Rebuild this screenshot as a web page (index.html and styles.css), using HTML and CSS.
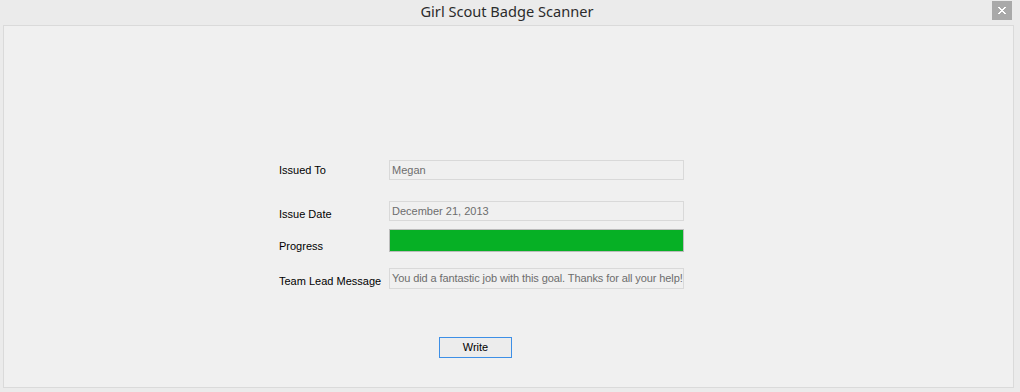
FILE: index.html
```html
<!DOCTYPE html>
<html>
<head>
<meta charset="utf-8">
<link rel="stylesheet" href="styles.css">
</head>
<body>
<div class="window">
  <div class="titlebar">
    <span class="title">Girl Scout Badge Scanner</span>
    <div class="close">
      <svg width="8" height="7" viewBox="0 0 8 7"><path d="M0 0h2v1h1v1h2V1h1V0h2v1H7v1H6v1H5v1h1v1h1v1h1v1H6V6H5V5H3v1H2v1H0V6h1V5h1V4h1V3H2V2H1V1H0z" fill="#fff"/></svg>
    </div>
  </div>
  <div class="client">
    <div class="form">
      <div class="row r1">
        <div class="label">Issued To</div>
        <div class="field box">Megan</div>
      </div>
      <div class="row r2">
        <div class="label">Issue Date</div>
        <div class="field box">December 21, 2013</div>
      </div>
      <div class="row r3">
        <div class="label">Progress</div>
        <div class="field progress"><div class="fill" style="width:100%"></div></div>
      </div>
      <div class="row r4">
        <div class="label">Team Lead Message</div>
        <div class="field box msg">You did a fantastic job with this goal. Thanks for all your help!</div>
      </div>
      <div class="actions">
        <button class="btn">Write</button>
      </div>
    </div>
  </div>
</div>
</body>
</html>
```
FILE: styles.css
```css
html, body {
  margin: 0;
  padding: 0;
  background: #ebebeb;
}
.window {
  width: 1020px;
  height: 392px;
  background: #ebebeb;
  font-family: "Liberation Sans", Arial, sans-serif;
  position: relative;
}
.titlebar {
  height: 25px;
  display: flex;
  justify-content: center;
  align-items: flex-start;
}
.title {
  font-family: "Noto Sans", "Open Sans", sans-serif;
  font-size: 14.6px;
  line-height: 22px;
  color: #2b2b2b;
  margin-left: -6px;
}
.close {
  position: absolute;
  left: 992px;
  top: 1px;
  width: 20px;
  height: 19px;
  background: #a9a9a9;
  display: flex;
  align-items: center;
  justify-content: center;
}
.client {
  margin-left: 3px;
  width: 1011px;
  height: 363px;
  box-sizing: border-box;
  border: 1px solid #dadada;
  background: #f0f0f0;
  padding-top: 134px;
  padding-left: 275px;
}
.form {
  display: flex;
  flex-direction: column;
  width: 405px;
}
.row {
  display: flex;
  align-items: flex-start;
}
.label {
  width: 110px;
  font-size: 11px;
  line-height: 13px;
  color: #000;
}
.field {
  width: 295px;
  box-sizing: border-box;
}
.box {
  height: 20px;
  border: 1px solid #d9d9d9;
  background: #f0f0f0;
  color: #6d6d6d;
  font-size: 11px;
  line-height: 18px;
  padding-left: 2px;
  white-space: nowrap;
  overflow: hidden;
}
.r1 .label { padding-top: 4px; }
.r2 { margin-top: 21px; }
.r2 .label { padding-top: 7px; }
.r3 { margin-top: 8px; }
.r3 .label { padding-top: 11px; }
.progress {
  height: 23px;
  border: 1px solid #bcbcbc;
  background: #e6e6e6;
}
.fill {
  height: 100%;
  background: #06b025;
}
.r4 { margin-top: 15px; }
.r4 .label { padding-top: 7px; }
.msg {
  height: 21px;
  line-height: 18px;
  letter-spacing: -0.1px;
}
.actions {
  margin-top: 48px;
  padding-left: 160px;
  display: flex;
}
.btn {
  -webkit-appearance: none;
  appearance: none;
  width: 73px;
  height: 21px;
  box-sizing: border-box;
  border: 1px solid #3d8fe6;
  border-radius: 0;
  background: #ececec;
  font-family: "Liberation Sans", Arial, sans-serif;
  font-size: 11px;
  line-height: 19px;
  color: #000;
  padding: 0;
  margin: 0;
}
```
